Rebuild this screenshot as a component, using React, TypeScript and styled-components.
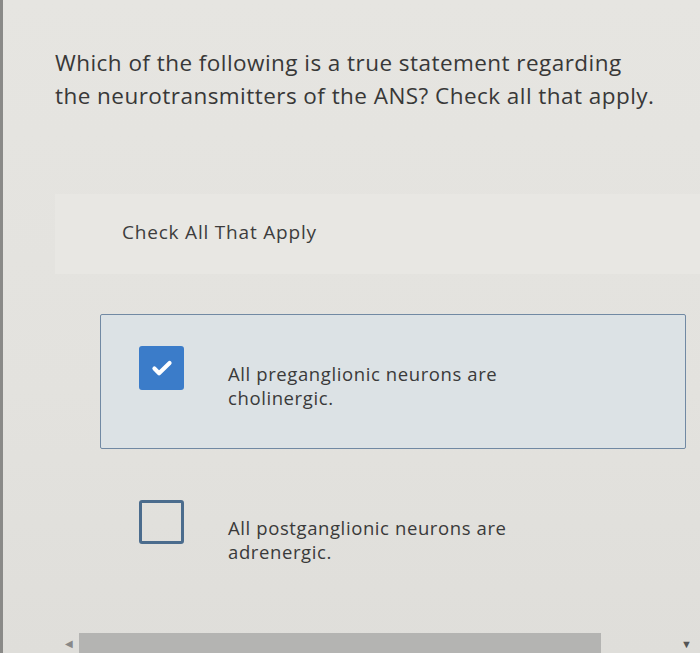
import styled, { createGlobalStyle } from "styled-components";

const GlobalStyle = createGlobalStyle`
  html, body {
    margin: 0;
    padding: 0;
    background: #e4e3df;
  }
  body {
    font-family: "Open Sans", Lato, sans-serif;
    color: #3b3b3b;
  }
`;

const Page = styled.div`
  height: 653px;
  display: flex;
  flex-direction: column;
  overflow: hidden;
  border-left: 3px solid #8a8a88;
  box-sizing: border-box;
  background: linear-gradient(180deg, #e6e5e1 0%, #e3e2de 60%, #dfdeda 100%);
`;

const Question = styled.p`
  margin: 46px 0 0 52px;
  font-size: 22.5px;
  letter-spacing: 0.45px;
  line-height: 33px;
  color: #383838;
  width: 607px;
`;

const Instructions = styled.div`
  margin: 82px 0 0 52px;
  height: 80px;
  display: flex;
  align-items: center;
  padding-left: 67px;
  padding-bottom: 4px;
  box-sizing: border-box;
  background: #e8e7e3;
  font-size: 19px;
  letter-spacing: 0.8px;
  color: #3d3d3d;
`;

const Options = styled.div`
  display: flex;
  flex-direction: column;
  gap: 19px;
  margin: 40px 14px 0 97px;
`;

const Option = styled.label<{ $selected?: boolean }>`
  display: flex;
  align-items: flex-start;
  height: 135px;
  padding: 31px 0 0 38px;
  gap: 44px;
  box-sizing: border-box;
  border: 1.5px solid ${(p) => (p.$selected ? "#7189a3" : "transparent")};
  border-radius: 2px;
  background: ${(p) => (p.$selected ? "#dce2e5" : "transparent")};
`;

const Box = styled.span<{ $checked?: boolean }>`
  flex: none;
  width: 45px;
  height: 44px;
  box-sizing: border-box;
  border-radius: 3px;
  display: flex;
  align-items: center;
  justify-content: center;
  background: ${(p) => (p.$checked ? "#3b7cc9" : "transparent")};
  border: 3px solid ${(p) => (p.$checked ? "#3b7cc9" : "#4b6c8d")};
`;

const OptionText = styled.span`
  font-size: 18.5px;
  letter-spacing: 0.6px;
  line-height: 24px;
  color: #3a3a3a;
  width: 300px;
  padding-top: 16px;
`;

const ScrollBar = styled.div`
  margin-top: auto;
  height: 20px;
  display: flex;
  align-items: center;
  padding: 0 8px 0 62px;
`;

const Arrow = styled.span`
  font-size: 10px;
  color: #888;
  width: 14px;
`;

const Track = styled.div`
  flex: 1;
  height: 20px;
  margin-right: 80px;
  background: #b4b4b2;
  align-self: flex-end;
`;

const DownArrow = styled.span`
  font-size: 11px;
  color: #555;
`;

function Check() {
  return (
    <svg width="26" height="26" viewBox="0 0 24 24">
      <path
        d="M5 12.5l4.3 4.3L19 7.3"
        fill="none"
        stroke="#fff"
        strokeWidth="3.8"
        strokeLinecap="round"
        strokeLinejoin="round"
      />
    </svg>
  );
}

const answers = [
  { text: "All preganglionic neurons are cholinergic.", checked: true },
  { text: "All postganglionic neurons are adrenergic.", checked: false },
];

export default function App() {
  return (
    <Page>
      <GlobalStyle />
      <Question>
        Which of the following is a true statement regarding the
        neurotransmitters of the ANS? Check all that apply.
      </Question>
      <Instructions>Check All That Apply</Instructions>
      <Options>
        {answers.map((a) => (
          <Option key={a.text} $selected={a.checked}>
            <Box $checked={a.checked}>{a.checked && <Check />}</Box>
            <OptionText>{a.text}</OptionText>
          </Option>
        ))}
      </Options>
      <ScrollBar>
        <Arrow>◀</Arrow>
        <Track />
        <DownArrow>▼</DownArrow>
      </ScrollBar>
    </Page>
  );
}
